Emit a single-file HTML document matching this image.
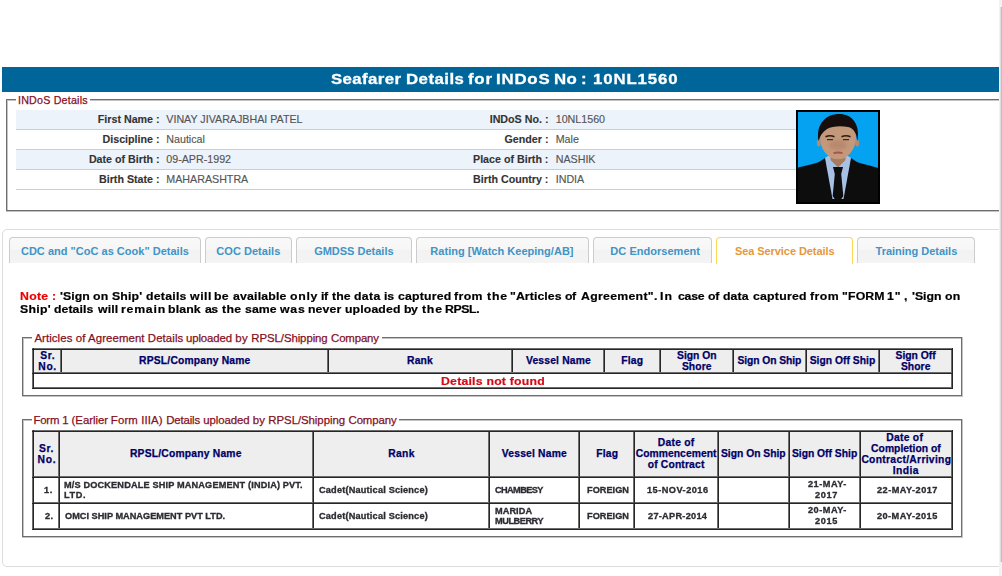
<!DOCTYPE html>
<html lang="en"><head><meta charset="utf-8"><title>Seafarer Details</title>
<style>
html,body{margin:0;padding:0;background:#fff}
body{width:1002px;height:576px;position:relative;overflow:hidden;font-family:"Liberation Sans",sans-serif}
#page{position:absolute;left:0;top:0;width:999px;height:576px;overflow:hidden}
.b{position:absolute;box-sizing:content-box}
.t{position:absolute;white-space:nowrap;line-height:16px;transform-origin:0 0;font-family:"Liberation Sans",sans-serif}
.T{font-weight:bold;font-size:15.3px;color:#ffffff;-webkit-text-stroke:0.3px #ffffff;transform:scaleX(1.1)}
.N{font-weight:bold;font-size:11.6px;color:#000000;-webkit-text-stroke:0.2px #000000;transform:scaleX(1.06)}
.NR{font-weight:bold;font-size:11.6px;color:#ee0000;-webkit-text-stroke:0.2px #ee0000;transform:scaleX(1.06)}
.DN{font-weight:bold;font-size:11.6px;color:#d40a14;-webkit-text-stroke:0.2px #d40a14;transform:scaleX(1.06)}
.H{font-weight:bold;font-size:10.3px;color:#000066;-webkit-text-stroke:0.25px #000066}
.D{font-weight:bold;font-size:8.5px;color:#2b2b33;-webkit-text-stroke:0.3px #2b2b33;transform:scaleX(1.08)}
.LG{font-weight:normal;font-size:11.4px;color:#850f1e;-webkit-text-stroke:0.25px #850f1e}
.LG2{font-weight:normal;font-size:10.7px;color:#850f1e;-webkit-text-stroke:0.25px #850f1e}
.LB{font-weight:bold;font-size:10.7px;color:#333333;-webkit-text-stroke:0.12px #333333}
.VL{font-weight:normal;font-size:10.7px;color:#555555;-webkit-text-stroke:0.15px #555555}
.TB{font-weight:bold;font-size:11px;color:#4094c6}
.TA{font-weight:bold;font-size:11px;color:#e8963a}
</style></head>
<body>
<div id="page">
<!-- title bar -->
<div class="b" style="left:2px;top:67px;width:1000px;height:25px;background:#006699"></div>
<span class="t T" style="left:330.52px;top:71px;letter-spacing:0.347px">Seafarer</span>
<span class="t T" style="left:405.67px;top:71px;letter-spacing:0.413px">Details</span>
<span class="t T" style="left:467.61px;top:71px;letter-spacing:0.685px">for</span>
<span class="t T" style="left:495.87px;top:71px;letter-spacing:0.726px">INDoS</span>
<span class="t T" style="left:554.27px;top:71px;letter-spacing:0.226px">No</span>
<span class="t T" style="left:581.18px;top:71px">:</span>
<span class="t T" style="left:592.94px;top:71px;letter-spacing:0.773px">10NL1560</span>
<!-- INDoS details fieldset -->
<div class="b" style="left:6px;top:99px;width:999px;height:1px;background:#6e6e6e"></div>
<div class="b" style="left:7px;top:100px;width:997px;height:1px;background:#c4c4c4"></div>
<div class="b" style="left:6px;top:99px;width:1px;height:113px;background:#6e6e6e"></div>
<div class="b" style="left:7px;top:100px;width:1px;height:111px;background:#c4c4c4"></div>
<div class="b" style="left:7px;top:210px;width:997px;height:1px;background:#6e6e6e"></div>
<div class="b" style="left:6px;top:211px;width:999px;height:1px;background:#c4c4c4"></div>
<div class="b" style="left:16px;top:97px;width:74px;height:6px;background:#fff"></div>
<span class="t LG2" style="left:18.01px;top:92px;letter-spacing:0.207px">INDoS Details</span>
<div class="b" style="left:16px;top:110px;width:780px;height:19px;background:#edf3fb"></div>
<div class="b" style="left:16px;top:129px;width:780px;height:1px;background:#cccdd0"></div>
<div class="b" style="left:16px;top:130px;width:780px;height:19px;background:#ffffff"></div>
<div class="b" style="left:16px;top:149px;width:780px;height:1px;background:#cccdd0"></div>
<div class="b" style="left:16px;top:150px;width:780px;height:19px;background:#edf3fb"></div>
<div class="b" style="left:16px;top:169px;width:780px;height:1px;background:#cccdd0"></div>
<div class="b" style="left:16px;top:170px;width:780px;height:19px;background:#ffffff"></div>
<div class="b" style="left:16px;top:189px;width:780px;height:1px;background:#cccdd0"></div>
<span class="t LB" style="left:97.79px;top:111px">First Name :</span>
<span class="t VL" style="left:166.30px;top:111px">VINAY JIVARAJBHAI PATEL</span>
<span class="t LB" style="left:489.68px;top:111px">INDoS No. :</span>
<span class="t VL" style="left:555.70px;top:111px">10NL1560</span>
<span class="t LB" style="left:102.55px;top:131px">Discipline :</span>
<span class="t VL" style="left:166.30px;top:131px">Nautical</span>
<span class="t LB" style="left:504.53px;top:131px">Gender :</span>
<span class="t VL" style="left:555.70px;top:131px">Male</span>
<span class="t LB" style="left:88.89px;top:151px">Date of Birth :</span>
<span class="t VL" style="left:166.30px;top:151px">09-APR-1992</span>
<span class="t LB" style="left:473.02px;top:151px">Place of Birth :</span>
<span class="t VL" style="left:555.70px;top:151px">NASHIK</span>
<span class="t LB" style="left:98.99px;top:171px">Birth State :</span>
<span class="t VL" style="left:166.30px;top:171px">MAHARASHTRA</span>
<span class="t LB" style="left:473.04px;top:171px">Birth Country :</span>
<span class="t VL" style="left:555.70px;top:171px">INDIA</span>
<svg class="b" style="left:796px;top:110px" width="84" height="94" viewBox="0 0 84 94">
<defs><filter id="bl" x="-10%" y="-10%" width="120%" height="120%"><feGaussianBlur stdDeviation="0.6"/></filter>
<filter id="b2" x="-30%" y="-30%" width="160%" height="160%"><feGaussianBlur stdDeviation="1.6"/></filter>
<clipPath id="cp"><rect x="2" y="2" width="80" height="90"/></clipPath></defs>
<rect width="84" height="94" fill="#000"/>
<rect x="2" y="2" width="80" height="90" fill="#05a2f1"/>
<g clip-path="url(#cp)" filter="url(#bl)">
<path d="M0 58 C8 56 18 54 23 52 L29 48 L42 60 L55 48 L61 52 C66 54 76 56 84 58.5 L84 94 L0 94Z" fill="#0d0d11"/>
<path d="M29 48 L35 44 L49 44 L55 48 L47.5 89 L36.5 89Z" fill="#a7c1e4"/>
<path d="M34.5 38 L49.5 38 L49.5 50 L42 57.5 L34.5 50Z" fill="#a97c5f"/>
<path d="M37 57 L47 57 L45.2 64 L47.3 86 L42 94 L36.7 86 L38.8 64Z" fill="#09090d"/>
<ellipse cx="22.8" cy="33" rx="2" ry="3.6" fill="#b78a6c"/><ellipse cx="61.2" cy="33" rx="2" ry="3.6" fill="#b78a6c"/>
<path d="M24 27 C24 16 31 11 42 11 C53 11 60 16 60 27 C60 36 56 43 50 47 C46 50 38 50 34 47 C28 43 24 36 24 27Z" fill="#c4987a"/>
<ellipse cx="42" cy="35" rx="9" ry="5" fill="#b07f63" filter="url(#b2)" opacity=".55"/>
<path d="M22.6 31 C19.5 14 30 4 43 4 C56 4 64.5 14 61.4 31 C60.5 23 57.5 18 52 17 C45 15.5 36 16 31 19 C26.5 22 23.8 26 22.6 31Z" fill="#15110f"/>
<path d="M29.5 26.8 C32 25.6 36 25.6 38.5 26.8 M45.5 26.8 C48 25.6 52 25.6 54.5 26.8" stroke="#2b1d15" stroke-width="1.5" fill="none"/>
<path d="M31 29.6h6M47 29.6h6" stroke="#3a2a22" stroke-width="1.3"/>
<path d="M37.5 43.2 C40 42.4 44 42.4 46.5 43.2" stroke="#a5544b" stroke-width="1.8" fill="none"/>
</g></svg>
<!-- tabs widget -->
<div class="b" style="left:2px;top:229px;width:1010px;height:336px;border:1px solid #dddddd;border-radius:5px;background:#fff"></div>
<div class="b" style="left:9px;top:237px;width:190px;height:25px;border:1px solid #cccccc;border-bottom:0;border-radius:4px 4px 0 0;background:linear-gradient(to bottom,#f9f9f9 0,#f6f6f6 50%,#f2f2f2 50%,#f4f4f4 100%)"></div>
<span class="t TB" style="left:20.95px;top:243px;letter-spacing:0.014px">CDC and &quot;CoC as Cook&quot; Details</span>
<div class="b" style="left:205px;top:237px;width:85px;height:25px;border:1px solid #cccccc;border-bottom:0;border-radius:4px 4px 0 0;background:linear-gradient(to bottom,#f9f9f9 0,#f6f6f6 50%,#f2f2f2 50%,#f4f4f4 100%)"></div>
<span class="t TB" style="left:216.35px;top:243px;letter-spacing:0.033px">COC Details</span>
<div class="b" style="left:296px;top:237px;width:114px;height:25px;border:1px solid #cccccc;border-bottom:0;border-radius:4px 4px 0 0;background:linear-gradient(to bottom,#f9f9f9 0,#f6f6f6 50%,#f2f2f2 50%,#f4f4f4 100%)"></div>
<span class="t TB" style="left:314.15px;top:243px;letter-spacing:-0.005px">GMDSS Details</span>
<div class="b" style="left:416px;top:237px;width:171px;height:25px;border:1px solid #cccccc;border-bottom:0;border-radius:4px 4px 0 0;background:linear-gradient(to bottom,#f9f9f9 0,#f6f6f6 50%,#f2f2f2 50%,#f4f4f4 100%)"></div>
<span class="t TB" style="left:430.36px;top:243px;letter-spacing:0.024px">Rating [Watch Keeping/AB]</span>
<div class="b" style="left:593px;top:237px;width:117px;height:25px;border:1px solid #cccccc;border-bottom:0;border-radius:4px 4px 0 0;background:linear-gradient(to bottom,#f9f9f9 0,#f6f6f6 50%,#f2f2f2 50%,#f4f4f4 100%)"></div>
<span class="t TB" style="left:610.36px;top:243px;letter-spacing:0.026px">DC Endorsement</span>
<div class="b" style="left:716px;top:237px;width:135px;height:26px;border:1px solid #fbd850;border-bottom:0;border-radius:4px 4px 0 0;background:#fff"></div>
<span class="t TA" style="left:734.98px;top:243px;letter-spacing:-0.074px">Sea Service Details</span>
<div class="b" style="left:857px;top:237px;width:116px;height:25px;border:1px solid #cccccc;border-bottom:0;border-radius:4px 4px 0 0;background:linear-gradient(to bottom,#f9f9f9 0,#f6f6f6 50%,#f2f2f2 50%,#f4f4f4 100%)"></div>
<span class="t TB" style="left:875.58px;top:243px;letter-spacing:-0.016px">Training Details</span>
<!-- note -->
<span class="t NR" style="left:19.98px;top:288px;letter-spacing:0.249px">Note :&nbsp;</span>
<span class="t N" style="left:60.25px;top:288px;letter-spacing:0.036px">'Sign</span>
<span class="t N" style="left:93.32px;top:288px;letter-spacing:0.114px">on</span>
<span class="t N" style="left:111.95px;top:288px;letter-spacing:0.124px">Ship'</span>
<span class="t N" style="left:145.50px;top:288px;letter-spacing:0.229px">details</span>
<span class="t N" style="left:190.04px;top:288px;letter-spacing:0.541px">will</span>
<span class="t N" style="left:214.49px;top:288px;letter-spacing:0.171px">be</span>
<span class="t N" style="left:232.84px;top:288px;letter-spacing:0.168px">available</span>
<span class="t N" style="left:289.92px;top:288px;letter-spacing:0.651px">only</span>
<span class="t N" style="left:320.94px;top:288px;letter-spacing:-0.500px">if</span>
<span class="t N" style="left:331.65px;top:288px;letter-spacing:0.060px">the</span>
<span class="t N" style="left:353.90px;top:288px;letter-spacing:0.328px">data</span>
<span class="t N" style="left:384.04px;top:288px;letter-spacing:-0.181px">is</span>
<span class="t N" style="left:397.72px;top:288px;letter-spacing:0.170px">captured</span>
<span class="t N" style="left:454.49px;top:288px;letter-spacing:0.361px">from</span>
<span class="t N" style="left:486.65px;top:288px;letter-spacing:0.767px">the</span>
<span class="t N" style="left:510.09px;top:288px;letter-spacing:0.080px">&quot;Articles</span>
<span class="t N" style="left:565.32px;top:288px;letter-spacing:-0.500px">of</span>
<span class="t N" style="left:580.69px;top:288px;letter-spacing:0.271px">Agreement&quot;.</span>
<span class="t N" style="left:659.98px;top:288px;letter-spacing:1.000px">In</span>
<span class="t N" style="left:677.52px;top:288px;letter-spacing:-0.205px">case</span>
<span class="t N" style="left:707.92px;top:288px;letter-spacing:-0.235px">of</span>
<span class="t N" style="left:723.40px;top:288px;letter-spacing:0.077px">data</span>
<span class="t N" style="left:753.12px;top:288px;letter-spacing:0.211px">captured</span>
<span class="t N" style="left:810.19px;top:288px;letter-spacing:0.393px">from</span>
<span class="t N" style="left:841.79px;top:288px;letter-spacing:0.143px">&quot;FORM</span>
<span class="t N" style="left:887.43px;top:288px;letter-spacing:0.865px">1&quot;</span>
<span class="t N" style="left:903.97px;top:288px">,</span>
<span class="t N" style="left:911.95px;top:288px;letter-spacing:-0.011px">'Sign</span>
<span class="t N" style="left:944.82px;top:288px;letter-spacing:0.208px">on</span>
<span class="t N" style="left:20.15px;top:301px;letter-spacing:0.289px">Ship'</span>
<span class="t N" style="left:54.40px;top:301px;letter-spacing:0.056px">details</span>
<span class="t N" style="left:97.84px;top:301px;letter-spacing:0.101px">will</span>
<span class="t N" style="left:120.89px;top:301px;letter-spacing:0.727px">remain</span>
<span class="t N" style="left:168.09px;top:301px;letter-spacing:0.138px">blank</span>
<span class="t N" style="left:205.04px;top:301px;letter-spacing:-0.500px">as</span>
<span class="t N" style="left:221.65px;top:301px;letter-spacing:0.343px">the</span>
<span class="t N" style="left:244.57px;top:301px;letter-spacing:0.064px">same</span>
<span class="t N" style="left:280.44px;top:301px;letter-spacing:0.720px">was</span>
<span class="t N" style="left:308.49px;top:301px;letter-spacing:0.091px">never</span>
<span class="t N" style="left:345.34px;top:301px;letter-spacing:0.111px">uploaded</span>
<span class="t N" style="left:403.79px;top:301px;letter-spacing:-0.500px">by</span>
<span class="t N" style="left:421.75px;top:301px;letter-spacing:0.720px">the</span>
<span class="t N" style="left:445.08px;top:301px;letter-spacing:-0.387px">RPSL.</span>
<!-- Articles of Agreement fieldset -->
<div class="b" style="left:22px;top:337px;width:941px;height:1px;background:#6e6e6e"></div>
<div class="b" style="left:23px;top:338px;width:939px;height:1px;background:#c4c4c4"></div>
<div class="b" style="left:22px;top:337px;width:1px;height:60px;background:#6e6e6e"></div>
<div class="b" style="left:23px;top:338px;width:1px;height:58px;background:#c4c4c4"></div>
<div class="b" style="left:23px;top:395px;width:939px;height:1px;background:#6e6e6e"></div>
<div class="b" style="left:22px;top:396px;width:941px;height:1px;background:#c4c4c4"></div>
<div class="b" style="left:961px;top:338px;width:1px;height:58px;background:#6e6e6e"></div>
<div class="b" style="left:962px;top:337px;width:1px;height:60px;background:#c4c4c4"></div>
<div class="b" style="left:32px;top:335px;width:350px;height:6px;background:#fff"></div>
<span class="t LG" style="left:34.38px;top:330px;letter-spacing:0.092px">Articles of Agreement Details&nbsp;</span>
<span class="t LG" style="left:185.96px;top:330px;letter-spacing:-0.098px">uploaded&nbsp;</span>
<span class="t LG" style="left:235.17px;top:330px;letter-spacing:0.397px">by&nbsp;</span>
<span class="t LG" style="left:251.36px;top:330px;letter-spacing:-0.078px">RPSL/Shipping&nbsp;</span>
<span class="t LG" style="left:331.12px;top:330px;letter-spacing:-0.148px">Company</span>
<div class="b" style="left:32px;top:348px;width:921px;height:41px;background:#fff"></div>
<div class="b" style="left:32px;top:348px;width:921px;height:24px;background:#eeeeee"></div>
<div class="b" style="left:32px;top:348px;width:1px;height:41px;background:#6c6c6c"></div>
<div class="b" style="left:33px;top:348px;width:1px;height:41px;background:#262626"></div>
<div class="b" style="left:60px;top:348px;width:1px;height:26px;background:#6c6c6c"></div>
<div class="b" style="left:61px;top:348px;width:1px;height:26px;background:#262626"></div>
<div class="b" style="left:327px;top:348px;width:1px;height:26px;background:#6c6c6c"></div>
<div class="b" style="left:328px;top:348px;width:1px;height:26px;background:#262626"></div>
<div class="b" style="left:511px;top:348px;width:1px;height:26px;background:#6c6c6c"></div>
<div class="b" style="left:512px;top:348px;width:1px;height:26px;background:#262626"></div>
<div class="b" style="left:603px;top:348px;width:1px;height:26px;background:#6c6c6c"></div>
<div class="b" style="left:604px;top:348px;width:1px;height:26px;background:#262626"></div>
<div class="b" style="left:659px;top:348px;width:1px;height:26px;background:#6c6c6c"></div>
<div class="b" style="left:660px;top:348px;width:1px;height:26px;background:#262626"></div>
<div class="b" style="left:732px;top:348px;width:1px;height:26px;background:#6c6c6c"></div>
<div class="b" style="left:733px;top:348px;width:1px;height:26px;background:#262626"></div>
<div class="b" style="left:805px;top:348px;width:1px;height:26px;background:#6c6c6c"></div>
<div class="b" style="left:806px;top:348px;width:1px;height:26px;background:#262626"></div>
<div class="b" style="left:878px;top:348px;width:1px;height:26px;background:#6c6c6c"></div>
<div class="b" style="left:879px;top:348px;width:1px;height:26px;background:#262626"></div>
<div class="b" style="left:951px;top:348px;width:1px;height:41px;background:#6c6c6c"></div>
<div class="b" style="left:952px;top:348px;width:1px;height:41px;background:#262626"></div>
<div class="b" style="left:32px;top:348px;width:921px;height:1px;background:#6c6c6c"></div>
<div class="b" style="left:32px;top:349px;width:921px;height:1px;background:#262626"></div>
<div class="b" style="left:32px;top:372px;width:921px;height:1px;background:#6c6c6c"></div>
<div class="b" style="left:32px;top:373px;width:921px;height:1px;background:#262626"></div>
<div class="b" style="left:32px;top:387px;width:921px;height:1px;background:#6c6c6c"></div>
<div class="b" style="left:32px;top:388px;width:921px;height:1px;background:#262626"></div>
<div class="b" style="left:33px;top:348px;width:1px;height:1px;background:#262626"></div>
<div class="b" style="left:33px;top:372px;width:1px;height:1px;background:#262626"></div>
<div class="b" style="left:33px;top:387px;width:1px;height:1px;background:#262626"></div>
<div class="b" style="left:952px;top:348px;width:1px;height:1px;background:#262626"></div>
<div class="b" style="left:952px;top:372px;width:1px;height:1px;background:#262626"></div>
<div class="b" style="left:952px;top:387px;width:1px;height:1px;background:#262626"></div>
<span class="t H" style="left:40.20px;top:348px;letter-spacing:0.617px">Sr.</span>
<span class="t H" style="left:38.31px;top:359px;letter-spacing:0.653px">No.</span>
<span class="t H" style="left:139.11px;top:353px;letter-spacing:0.192px">RPSL/Company Name</span>
<span class="t H" style="left:407.11px;top:353px;letter-spacing:0.131px">Rank</span>
<span class="t H" style="left:525.93px;top:353px;letter-spacing:0.193px">Vessel Name</span>
<span class="t H" style="left:621.31px;top:353px;letter-spacing:0.168px">Flag</span>
<span class="t H" style="left:677.10px;top:348px;letter-spacing:-0.024px">Sign On</span>
<span class="t H" style="left:681.90px;top:359px;letter-spacing:0.115px">Shore</span>
<span class="t H" style="left:737.40px;top:353px;letter-spacing:-0.058px">Sign On Ship</span>
<span class="t H" style="left:809.70px;top:353px;letter-spacing:0.024px">Sign Off Ship</span>
<span class="t H" style="left:895.50px;top:348px;letter-spacing:0.018px">Sign Off</span>
<span class="t H" style="left:900.90px;top:359px;letter-spacing:0.090px">Shore</span>
<span class="t DN" style="left:440.58px;top:373px;letter-spacing:0.202px">Details not found</span>
<!-- Form 1 fieldset -->
<div class="b" style="left:22px;top:419px;width:941px;height:1px;background:#6e6e6e"></div>
<div class="b" style="left:23px;top:420px;width:939px;height:1px;background:#c4c4c4"></div>
<div class="b" style="left:22px;top:419px;width:1px;height:119px;background:#6e6e6e"></div>
<div class="b" style="left:23px;top:420px;width:1px;height:117px;background:#c4c4c4"></div>
<div class="b" style="left:23px;top:536px;width:939px;height:1px;background:#6e6e6e"></div>
<div class="b" style="left:22px;top:537px;width:941px;height:1px;background:#c4c4c4"></div>
<div class="b" style="left:961px;top:420px;width:1px;height:117px;background:#6e6e6e"></div>
<div class="b" style="left:962px;top:419px;width:1px;height:119px;background:#c4c4c4"></div>
<div class="b" style="left:32px;top:417px;width:367px;height:6px;background:#fff"></div>
<span class="t LG" style="left:33.46px;top:412px;letter-spacing:-0.196px">Form 1&nbsp;</span>
<span class="t LG" style="left:71.59px;top:412px;letter-spacing:-0.045px">(Earlier&nbsp;</span>
<span class="t LG" style="left:110.86px;top:412px;letter-spacing:0.127px">Form&nbsp;</span>
<span class="t LG" style="left:141.15px;top:412px;letter-spacing:0.138px">IIIA)&nbsp;</span>
<span class="t LG" style="left:166.16px;top:412px;letter-spacing:-0.139px">Details&nbsp;</span>
<span class="t LG" style="left:203.26px;top:412px;letter-spacing:-0.065px">uploaded&nbsp;</span>
<span class="t LG" style="left:252.77px;top:412px;letter-spacing:0.197px">by&nbsp;</span>
<span class="t LG" style="left:268.36px;top:412px;letter-spacing:-0.049px">RPSL/Shipping&nbsp;</span>
<span class="t LG" style="left:348.52px;top:412px;letter-spacing:-0.115px">Company</span>
<div class="b" style="left:32px;top:430px;width:921px;height:100px;background:#fff"></div>
<div class="b" style="left:32px;top:430px;width:921px;height:46px;background:#eeeeee"></div>
<div class="b" style="left:32px;top:430px;width:1px;height:100px;background:#6c6c6c"></div>
<div class="b" style="left:33px;top:430px;width:1px;height:100px;background:#262626"></div>
<div class="b" style="left:58px;top:430px;width:1px;height:48px;background:#6c6c6c"></div>
<div class="b" style="left:59px;top:430px;width:1px;height:48px;background:#262626"></div>
<div class="b" style="left:58px;top:476px;width:1px;height:28px;background:#6c6c6c"></div>
<div class="b" style="left:59px;top:476px;width:1px;height:28px;background:#262626"></div>
<div class="b" style="left:58px;top:502px;width:1px;height:28px;background:#6c6c6c"></div>
<div class="b" style="left:59px;top:502px;width:1px;height:28px;background:#262626"></div>
<div class="b" style="left:312px;top:430px;width:1px;height:48px;background:#6c6c6c"></div>
<div class="b" style="left:313px;top:430px;width:1px;height:48px;background:#262626"></div>
<div class="b" style="left:312px;top:476px;width:1px;height:28px;background:#6c6c6c"></div>
<div class="b" style="left:313px;top:476px;width:1px;height:28px;background:#262626"></div>
<div class="b" style="left:312px;top:502px;width:1px;height:28px;background:#6c6c6c"></div>
<div class="b" style="left:313px;top:502px;width:1px;height:28px;background:#262626"></div>
<div class="b" style="left:488px;top:430px;width:1px;height:48px;background:#6c6c6c"></div>
<div class="b" style="left:489px;top:430px;width:1px;height:48px;background:#262626"></div>
<div class="b" style="left:488px;top:476px;width:1px;height:28px;background:#6c6c6c"></div>
<div class="b" style="left:489px;top:476px;width:1px;height:28px;background:#262626"></div>
<div class="b" style="left:488px;top:502px;width:1px;height:28px;background:#6c6c6c"></div>
<div class="b" style="left:489px;top:502px;width:1px;height:28px;background:#262626"></div>
<div class="b" style="left:578px;top:430px;width:1px;height:48px;background:#6c6c6c"></div>
<div class="b" style="left:579px;top:430px;width:1px;height:48px;background:#262626"></div>
<div class="b" style="left:578px;top:476px;width:1px;height:28px;background:#6c6c6c"></div>
<div class="b" style="left:579px;top:476px;width:1px;height:28px;background:#262626"></div>
<div class="b" style="left:578px;top:502px;width:1px;height:28px;background:#6c6c6c"></div>
<div class="b" style="left:579px;top:502px;width:1px;height:28px;background:#262626"></div>
<div class="b" style="left:633px;top:430px;width:1px;height:48px;background:#6c6c6c"></div>
<div class="b" style="left:634px;top:430px;width:1px;height:48px;background:#262626"></div>
<div class="b" style="left:633px;top:476px;width:1px;height:28px;background:#6c6c6c"></div>
<div class="b" style="left:634px;top:476px;width:1px;height:28px;background:#262626"></div>
<div class="b" style="left:633px;top:502px;width:1px;height:28px;background:#6c6c6c"></div>
<div class="b" style="left:634px;top:502px;width:1px;height:28px;background:#262626"></div>
<div class="b" style="left:717px;top:430px;width:1px;height:48px;background:#6c6c6c"></div>
<div class="b" style="left:718px;top:430px;width:1px;height:48px;background:#262626"></div>
<div class="b" style="left:717px;top:476px;width:1px;height:28px;background:#6c6c6c"></div>
<div class="b" style="left:718px;top:476px;width:1px;height:28px;background:#262626"></div>
<div class="b" style="left:717px;top:502px;width:1px;height:28px;background:#6c6c6c"></div>
<div class="b" style="left:718px;top:502px;width:1px;height:28px;background:#262626"></div>
<div class="b" style="left:788px;top:430px;width:1px;height:48px;background:#6c6c6c"></div>
<div class="b" style="left:789px;top:430px;width:1px;height:48px;background:#262626"></div>
<div class="b" style="left:788px;top:476px;width:1px;height:28px;background:#6c6c6c"></div>
<div class="b" style="left:789px;top:476px;width:1px;height:28px;background:#262626"></div>
<div class="b" style="left:788px;top:502px;width:1px;height:28px;background:#6c6c6c"></div>
<div class="b" style="left:789px;top:502px;width:1px;height:28px;background:#262626"></div>
<div class="b" style="left:859px;top:430px;width:1px;height:48px;background:#6c6c6c"></div>
<div class="b" style="left:860px;top:430px;width:1px;height:48px;background:#262626"></div>
<div class="b" style="left:859px;top:476px;width:1px;height:28px;background:#6c6c6c"></div>
<div class="b" style="left:860px;top:476px;width:1px;height:28px;background:#262626"></div>
<div class="b" style="left:859px;top:502px;width:1px;height:28px;background:#6c6c6c"></div>
<div class="b" style="left:860px;top:502px;width:1px;height:28px;background:#262626"></div>
<div class="b" style="left:951px;top:430px;width:1px;height:100px;background:#6c6c6c"></div>
<div class="b" style="left:952px;top:430px;width:1px;height:100px;background:#262626"></div>
<div class="b" style="left:32px;top:430px;width:921px;height:1px;background:#6c6c6c"></div>
<div class="b" style="left:32px;top:431px;width:921px;height:1px;background:#262626"></div>
<div class="b" style="left:32px;top:476px;width:921px;height:1px;background:#6c6c6c"></div>
<div class="b" style="left:32px;top:477px;width:921px;height:1px;background:#262626"></div>
<div class="b" style="left:32px;top:502px;width:921px;height:1px;background:#6c6c6c"></div>
<div class="b" style="left:32px;top:503px;width:921px;height:1px;background:#262626"></div>
<div class="b" style="left:32px;top:528px;width:921px;height:1px;background:#6c6c6c"></div>
<div class="b" style="left:32px;top:529px;width:921px;height:1px;background:#262626"></div>
<div class="b" style="left:33px;top:430px;width:1px;height:1px;background:#262626"></div>
<div class="b" style="left:33px;top:476px;width:1px;height:1px;background:#262626"></div>
<div class="b" style="left:33px;top:502px;width:1px;height:1px;background:#262626"></div>
<div class="b" style="left:33px;top:528px;width:1px;height:1px;background:#262626"></div>
<div class="b" style="left:59px;top:476px;width:1px;height:1px;background:#262626"></div>
<div class="b" style="left:59px;top:502px;width:1px;height:1px;background:#262626"></div>
<div class="b" style="left:313px;top:476px;width:1px;height:1px;background:#262626"></div>
<div class="b" style="left:313px;top:502px;width:1px;height:1px;background:#262626"></div>
<div class="b" style="left:489px;top:476px;width:1px;height:1px;background:#262626"></div>
<div class="b" style="left:489px;top:502px;width:1px;height:1px;background:#262626"></div>
<div class="b" style="left:579px;top:476px;width:1px;height:1px;background:#262626"></div>
<div class="b" style="left:579px;top:502px;width:1px;height:1px;background:#262626"></div>
<div class="b" style="left:634px;top:476px;width:1px;height:1px;background:#262626"></div>
<div class="b" style="left:634px;top:502px;width:1px;height:1px;background:#262626"></div>
<div class="b" style="left:718px;top:476px;width:1px;height:1px;background:#262626"></div>
<div class="b" style="left:718px;top:502px;width:1px;height:1px;background:#262626"></div>
<div class="b" style="left:789px;top:476px;width:1px;height:1px;background:#262626"></div>
<div class="b" style="left:789px;top:502px;width:1px;height:1px;background:#262626"></div>
<div class="b" style="left:860px;top:476px;width:1px;height:1px;background:#262626"></div>
<div class="b" style="left:860px;top:502px;width:1px;height:1px;background:#262626"></div>
<div class="b" style="left:952px;top:430px;width:1px;height:1px;background:#262626"></div>
<div class="b" style="left:952px;top:476px;width:1px;height:1px;background:#262626"></div>
<div class="b" style="left:952px;top:502px;width:1px;height:1px;background:#262626"></div>
<div class="b" style="left:952px;top:528px;width:1px;height:1px;background:#262626"></div>
<span class="t H" style="left:39.10px;top:441px;letter-spacing:0.567px">Sr.</span>
<span class="t H" style="left:37.51px;top:452px;letter-spacing:0.753px">No.</span>
<span class="t H" style="left:129.91px;top:446px;letter-spacing:0.210px">RPSL/Company Name</span>
<span class="t H" style="left:388.21px;top:446px;letter-spacing:0.331px">Rank</span>
<span class="t H" style="left:501.83px;top:446px;letter-spacing:0.193px">Vessel Name</span>
<span class="t H" style="left:596.21px;top:446px;letter-spacing:0.202px">Flag</span>
<span class="t H" style="left:657.71px;top:435px;letter-spacing:0.277px">Date of</span>
<span class="t H" style="left:635.68px;top:446px;letter-spacing:0.065px">Commencement</span>
<span class="t H" style="left:647.80px;top:457px;letter-spacing:0.160px">of Contract</span>
<span class="t H" style="left:721.00px;top:446px">Sign On Ship</span>
<span class="t H" style="left:791.90px;top:446px;letter-spacing:0.008px">Sign Off Ship</span>
<span class="t H" style="left:886.21px;top:430px;letter-spacing:0.293px">Date of</span>
<span class="t H" style="left:871.08px;top:441px;letter-spacing:0.039px">Completion of</span>
<span class="t H" style="left:861.38px;top:452px;letter-spacing:0.307px">Contract/Arriving</span>
<span class="t H" style="left:892.71px;top:463px;letter-spacing:0.447px">India</span>
<span class="t D" style="left:44.42px;top:482px;letter-spacing:0.698px">1.</span>
<span class="t D" style="left:64.49px;top:477px;letter-spacing:0.138px">M/S DOCKENDALE SHIP MANAGEMENT (INDIA) PVT.</span>
<span class="t D" style="left:64.49px;top:487px;letter-spacing:0.600px">LTD.</span>
<span class="t D" style="left:318.92px;top:482px;letter-spacing:0.175px">Cadet(Nautical Science)</span>
<span class="t D" style="left:495.42px;top:482px;letter-spacing:-0.557px">CHAMBESY</span>
<span class="t D" style="left:586.79px;top:482px;letter-spacing:0.017px">FOREIGN</span>
<span class="t D" style="left:646.62px;top:482px;letter-spacing:0.452px">15-NOV-2016</span>
<span class="t D" style="left:808.28px;top:476px;letter-spacing:0.465px">21-MAY-</span>
<span class="t D" style="left:814.58px;top:487px;letter-spacing:0.617px">2017</span>
<span class="t D" style="left:877.08px;top:482px;letter-spacing:0.428px">22-MAY-2017</span>
<span class="t D" style="left:44.68px;top:508px;letter-spacing:0.458px">2.</span>
<span class="t D" style="left:64.72px;top:508px;letter-spacing:0.010px">OMCI SHIP MANAGEMENT PVT LTD.</span>
<span class="t D" style="left:318.92px;top:508px;letter-spacing:0.175px">Cadet(Nautical Science)</span>
<span class="t D" style="left:494.99px;top:503px;letter-spacing:0.063px">MARIDA</span>
<span class="t D" style="left:495.19px;top:513px;letter-spacing:-0.412px">MULBERRY</span>
<span class="t D" style="left:586.79px;top:508px;letter-spacing:0.017px">FOREIGN</span>
<span class="t D" style="left:647.68px;top:508px;letter-spacing:0.263px">27-APR-2014</span>
<span class="t D" style="left:808.28px;top:502px;letter-spacing:0.465px">20-MAY-</span>
<span class="t D" style="left:814.58px;top:513px;letter-spacing:0.572px">2015</span>
<span class="t D" style="left:877.08px;top:508px;letter-spacing:0.414px">20-MAY-2015</span>
</div>
<!-- sliver of the browser scrollbar at the right edge -->
<div class="b" style="left:999px;top:0px;width:3px;height:576px;background:#f2f2f2"></div>
<div class="b" style="left:1000px;top:7px;width:1px;height:555px;background:#dedede"></div>
<div class="b" style="left:1001px;top:7px;width:1px;height:555px;background:#bfbfbf"></div>
</body></html>
